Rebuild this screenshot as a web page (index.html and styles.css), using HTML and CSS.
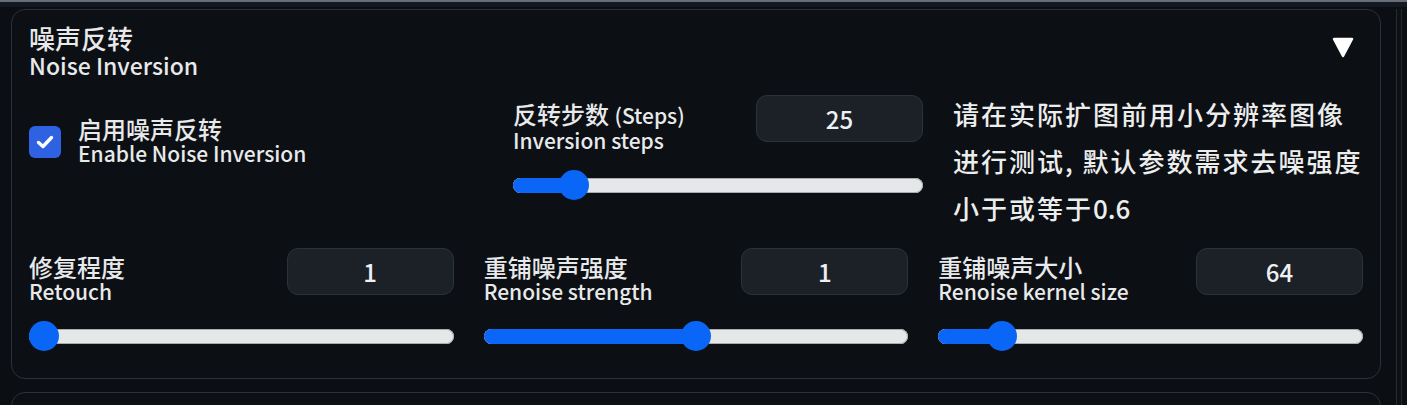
FILE: index.html
```html
<!DOCTYPE html>
<html lang="zh">
<head>
<meta charset="utf-8">
<title>Noise Inversion</title>
<link rel="stylesheet" href="styles.css">
</head>
<body>
<div class="topstrip"></div>
<div class="page">
  <main class="main">
    <section class="panel">
      <header class="panel-head">
        <div class="title">
          <div class="title-zh">噪声反转</div>
          <div class="title-en">Noise Inversion</div>
        </div>
        <svg class="caret" width="22" height="21" viewBox="0 0 22 21"><polygon points="2,2 20,2 11,19" fill="#ffffff" stroke="#ffffff" stroke-width="2.5" stroke-linejoin="round"/></svg>
      </header>

      <div class="row-top">
        <label class="check">
          <span class="box">
            <svg width="20" height="16" viewBox="0 0 20 16"><polyline points="3.5,8.5 8,12.5 16.5,3.5" fill="none" stroke="#ffffff" stroke-width="3.4" stroke-linecap="round" stroke-linejoin="round"/></svg>
          </span>
          <span class="check-label">
            <span class="zh">启用噪声反转</span>
            <span class="en">Enable Noise Inversion</span>
          </span>
        </label>

        <div class="slider-block">
          <div class="slider-head">
            <div class="label">
              <span class="zh">反转步数 <span class="en-inline">(Steps)</span></span>
              <span class="en">Inversion steps</span>
            </div>
            <div class="num">25</div>
          </div>
          <div class="slider" style="--p:0.121">
            <div class="track"><div class="fill"></div></div>
            <div class="thumb"></div>
          </div>
        </div>

        <div class="note">请在实际扩图前用小分辨率图像进行测试, 默认参数需求去噪强度小于或等于<span class="digits">0.6</span></div>
      </div>

      <div class="row-bottom">
        <div class="slider-block">
          <div class="slider-head">
            <div class="label">
              <span class="zh">修复程度</span>
              <span class="en">Retouch</span>
            </div>
            <div class="num">1</div>
          </div>
          <div class="slider" style="--p:0">
            <div class="track"><div class="fill"></div></div>
            <div class="thumb"></div>
          </div>
        </div>

        <div class="slider-block">
          <div class="slider-head">
            <div class="label">
              <span class="zh">重铺噪声强度</span>
              <span class="en">Renoise strength</span>
            </div>
            <div class="num">1</div>
          </div>
          <div class="slider" style="--p:0.5">
            <div class="track"><div class="fill"></div></div>
            <div class="thumb"></div>
          </div>
        </div>

        <div class="slider-block">
          <div class="slider-head">
            <div class="label">
              <span class="zh">重铺噪声大小</span>
              <span class="en">Renoise kernel size</span>
            </div>
            <div class="num">64</div>
          </div>
          <div class="slider" style="--p:0.124">
            <div class="track"><div class="fill"></div></div>
            <div class="thumb"></div>
          </div>
        </div>
      </div>
    </section>
    <section class="panel next-panel"></section>
  </main>
  <div class="gutter"></div>
</div>
</body>
</html>
```
FILE: styles.css
```css
* { box-sizing: border-box; }

html, body {
  margin: 0;
  padding: 0;
  height: 405px;
  overflow: hidden;
}

body {
  background: #0b0e12;
  color: #e8e9ea;
  font-family: "Noto Sans CJK SC", "Noto Sans", sans-serif;
  font-weight: 500;
}

.topstrip {
  height: 7px;
  background: #121922;
  border-top: 2px solid #6b6f74;
}

.page {
  display: flex;
  padding-top: 2px;
}

.main {
  width: 1381px;
  padding-left: 11px;
  display: flex;
  flex-direction: column;
  gap: 13px;
}

.panel {
  border: 1px solid #2d323a;
  border-radius: 14px;
  background: #0c0f14;
  padding: 14px 17px 27px 17px;
}

.next-panel {
  height: 60px;
}

.gutter {
  margin-left: 15px;
  width: 6px;
  height: 420px;
  border-left: 1px solid #262b32;
  border-right: 1px solid #262b32;
  background: #0d1015;
}

.panel-head {
  display: flex;
  justify-content: space-between;
  align-items: flex-start;
}

.title {
  display: flex;
  flex-direction: column;
}

.title-zh {
  font-size: 26px;
  line-height: 28px;
}

.title-en {
  font-size: 23px;
  line-height: 27px;
}

.caret {
  margin-top: 13px;
  margin-right: 9px;
}

.zh { font-size: 24px; line-height: 25px; }
.en { font-size: 21px; line-height: 25px; }
.en-inline { font-size: 21px; }

.row-top {
  display: grid;
  grid-template-columns: 454px 410px 410px;
  column-gap: 30px;
  margin-top: 16px;
}

.check {
  display: flex;
  align-items: center;
  gap: 17px;
  align-self: start;
  margin-top: 21px;
}

.box {
  width: 32px;
  height: 32px;
  border-radius: 6px;
  background: #2f62e3;
  display: flex;
  align-items: center;
  justify-content: center;
  margin-top: 2px;
}

.check-label {
  display: flex;
  flex-direction: column;
}

.slider-block {
  display: flex;
  flex-direction: column;
}

.slider-head {
  display: flex;
  justify-content: space-between;
  align-items: flex-start;
}

.label {
  display: flex;
  flex-direction: column;
  padding-top: 6px;
}

.num {
  width: 167px;
  height: 47px;
  border: 1px solid #2c323a;
  border-radius: 11px;
  background: #1c2128;
  font-size: 24px;
  display: flex;
  align-items: center;
  justify-content: center;
  color: #eef0f2;
}

.slider {
  position: relative;
  height: 30px;
  margin-top: 17px;
  display: flex;
  align-items: center;
}

.track {
  width: 100%;
  height: 15px;
  border-radius: 8px;
  background: #e6e7e8;
  box-shadow: inset 0 0 0 1px #a9abae;
  overflow: hidden;
}

.fill {
  height: 100%;
  width: calc(15px + var(--p) * (100% - 30px));
  background: #0b66f7;
}

.thumb {
  position: absolute;
  top: 0;
  left: calc(var(--p) * (100% - 30px));
  width: 30px;
  height: 30px;
  border-radius: 50%;
  background: #0a66f6;
}

.note {
  font-size: 26px;
  line-height: 47px;
  letter-spacing: 2px;
  margin-top: -5px;
  color: #eceded;
}

.digits {
  letter-spacing: 0;
}

.row-bottom {
  display: grid;
  grid-template-columns: 1fr 1fr 1fr;
  column-gap: 30px;
  margin-top: 17px;
}
```
